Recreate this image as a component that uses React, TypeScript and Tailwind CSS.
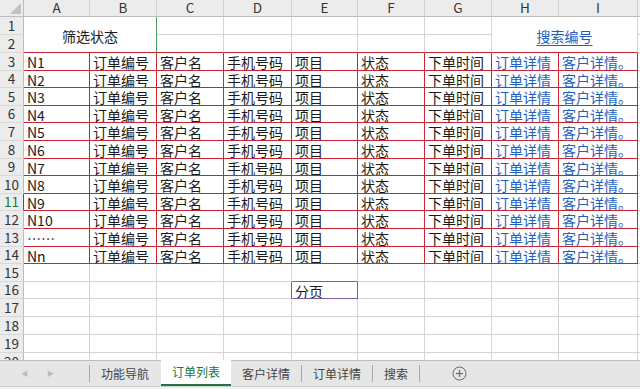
import React from "react";

const FONT = { fontFamily: '"Noto Sans CJK SC", "Noto Sans", sans-serif' };

const letters = ["A", "B", "C", "D", "E", "F", "G", "H", "I"];
const rowTexts = ["订单编号", "客户名", "手机号码", "项目", "状态", "下单时间"];
const firstCol = ["N1", "N2", "N3", "N4", "N5", "N6", "N7", "N8", "N9", "N10", "……", "Nn"];

const G = "border-r-[#d4d4d4]";
const GB = "border-b-[#d4d4d4]";

function rightCls(r: number, c: number) {
  if (r >= 3 && r <= 14 && c >= 1 && c <= 9) return "border-r-[#cc2232]";
  if (r === 16 && (c === 4 || c === 5)) return "border-r-[#7b5ea8]";
  return G;
}
function bottomCls(r: number, c: number) {
  if (r >= 2 && r <= 14 && c >= 1 && c <= 9) return "border-b-[#cc2232]";
  if ((r === 15 || r === 16) && c === 5) return "border-b-[#7b5ea8]";
  return GB;
}

function Cell({ r, c, children, link }: { r: number; c: number; children?: React.ReactNode; link?: boolean }) {
  return (
    <div
      className={`flex items-center overflow-hidden whitespace-nowrap border-r border-b pl-[3px] pt-[1px] text-[14px] leading-none ${rightCls(r, c)} ${bottomCls(r, c)} ${link ? "text-[#1f5fbf] underline underline-offset-[3px] decoration-1" : "text-[#1a1a1a]"}`}
    >
      {children}
    </div>
  );
}

function RowHead({ n }: { n: number }) {
  const sel = n === 11;
  return (
    <div
      className={`flex items-center justify-center border-b border-r border-b-[#d8d8d8] bg-[#ececec] text-[13.5px] leading-none ${sel ? "border-r-[#217346] text-[#217346]" : "border-r-[#bcbcbc] text-[#333]"}`}
    >
      {n}
    </div>
  );
}

export default function App() {
  const cells: React.ReactNode[] = [];
  cells.push(
    <div key="corner" className="relative border-b border-r border-b-[#bcbcbc] border-r-[#bcbcbc] bg-[#ececec]">
      <svg className="absolute bottom-[2px] right-[2px]" width="11" height="11" viewBox="0 0 11 11">
        <polygon points="11,0 11,11 0,11" fill="#c2c2c2" />
      </svg>
    </div>
  );
  letters.forEach((l) =>
    cells.push(
      <div
        key={"h" + l}
        className="flex items-center justify-center border-b border-r border-b-[#bcbcbc] border-r-[#d0d0d0] bg-[#ececec] text-[13.5px] leading-none text-[#333]"
      >
        {l}
      </div>
    )
  );
  cells.push(<div key="hfill" className="border-b border-b-[#bcbcbc] bg-[#ececec]" />);

  for (let r = 1; r <= 20; r++) {
    cells.push(<RowHead key={"rh" + r} n={r} />);
    if (r === 1) {
      cells.push(
        <div
          key="m1"
          className="col-span-2 row-span-2 flex items-center justify-center border-b border-r border-b-[#cc2232] border-r-[#4a9d6a] pt-[2px] text-[14px] leading-none text-[#1a1a1a]"
        >
          筛选状态
        </div>
      );
      for (let c = 3; c <= 7; c++) cells.push(<Cell key={`c${r}-${c}`} r={r} c={c} />);
      cells.push(
        <div
          key="m2"
          className="col-span-2 row-span-2 flex items-center justify-center border-b border-r border-b-[#cc2232] border-r-[#d4d4d4] pt-[2px] text-[14px] leading-none text-[#1f5fbf] underline underline-offset-[3px] decoration-1"
        >
          搜索编号
        </div>
      );
      cells.push(<div key={"f" + r} className="border-b border-b-[#d4d4d4]" />);
      continue;
    }
    if (r === 2) {
      for (let c = 3; c <= 7; c++) cells.push(<Cell key={`c${r}-${c}`} r={r} c={c} />);
      cells.push(<div key={"f" + r} className="border-b border-b-[#d4d4d4]" />);
      continue;
    }
    for (let c = 1; c <= 9; c++) {
      let content: React.ReactNode = null;
      let link = false;
      if (r >= 3 && r <= 14) {
        if (c === 1) content = firstCol[r - 3];
        else if (c <= 7) content = rowTexts[c - 2];
        else if (c === 8) {
          content = "订单详情";
          link = true;
        } else {
          content = "客户详情。";
          link = true;
        }
      }
      if (r === 16 && c === 5) content = "分页";
      cells.push(
        <Cell key={`c${r}-${c}`} r={r} c={c} link={link}>
          {content}
        </Cell>
      );
    }
    cells.push(<div key={"f" + r} className="border-b border-b-[#d4d4d4]" />);
  }

  const tabs = [
    { t: "功能导航", active: false },
    { t: "订单列表", active: true },
    { t: "客户详情", active: false },
    { t: "订单详情", active: false },
    { t: "搜索", active: false },
  ];

  return (
    <div className="flex h-[389px] w-[640px] flex-col overflow-hidden bg-white" style={FONT}>
      <div className="h-[360px] overflow-hidden">
        <div className="grid grid-cols-[24px_66px_67px_67px_68px_66px_67px_67px_67px_79px_1fr] grid-rows-[17px_18px_18px_18px_17px_18px_17px_18px_18px_17px_18px_17px_18px_18px_17px_18px_17px_18px_18px_18px_18px]">
          {cells}
        </div>
      </div>
      <div className="flex h-[26px] items-stretch border-t border-t-[#bdbdbd] bg-[#e6e6e6] text-[12px] text-[#444]">
        <div className="my-[4px] flex w-[90px] items-center border-r border-r-[#a8a8a8]">
          <span className="ml-[21px] text-[7px] text-[#bdbdbd]">◀</span>
          <span className="ml-[19px] text-[7px] text-[#bdbdbd]">▶</span>
        </div>
        {tabs.map((tab, i) => {
          const next = tabs[i + 1];
          const showSep = !tab.active && !(next && next.active);
          return (
            <div key={tab.t} className="flex items-stretch">
              {tab.active ? (
                <div className="-mt-[1px] ml-[1px] flex items-center border-b-2 border-b-[#217346] bg-white px-[11px] text-[#217346]">
                  {tab.t}
                </div>
              ) : (
                <div className="flex items-center px-[11px]">{tab.t}</div>
              )}
              {showSep && <div className="my-[4px] w-px bg-[#a8a8a8]" />}
            </div>
          );
        })}
        <div className="ml-[32px] flex items-center">
          <svg width="15" height="15" viewBox="0 0 15 15">
            <circle cx="7.5" cy="7.5" r="6.5" fill="none" stroke="#6b6b6b" strokeWidth="1" />
            <line x1="7.5" y1="4" x2="7.5" y2="11" stroke="#6b6b6b" strokeWidth="1.2" />
            <line x1="4" y1="7.5" x2="11" y2="7.5" stroke="#6b6b6b" strokeWidth="1.2" />
          </svg>
        </div>
      </div>
      <div className="flex-1 border-t border-t-[#cfcfcf] bg-[#f3f3f3]" />
    </div>
  );
}
